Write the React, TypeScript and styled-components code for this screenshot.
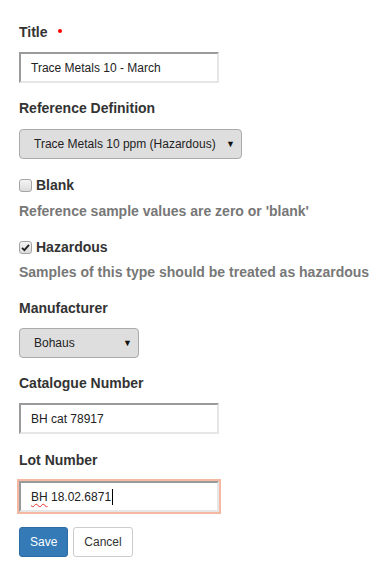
import React from "react";
import styled, { createGlobalStyle } from "styled-components";

const Global = createGlobalStyle`
  html, body { margin: 0; padding: 0; background: #fff; }
  body { font-family: "Liberation Sans", Arial, sans-serif; color: #333; }
`;

const Form = styled.form`
  display: flex;
  flex-direction: column;
  padding: 22px 0 0 19px;
`;

const Group = styled.div<{ $mb?: number }>`
  display: flex;
  flex-direction: column;
  align-items: flex-start;
  margin-bottom: ${(p) => p.$mb ?? 15}px;
`;

const Label = styled.label<{ $gap?: number }>`
  display: flex;
  align-items: center;
  font-size: 14px;
  line-height: 20px;
  font-weight: bold;
  color: #333;
  margin-bottom: ${(p) => p.$gap ?? 10}px;
`;

const Required = styled.span`
  width: 4px;
  height: 4px;
  border-radius: 50%;
  background: #f00;
  margin-left: 10px;
  margin-top: -2px;
`;

const TextBox = styled.div<{ $focus?: boolean }>`
  box-sizing: border-box;
  width: 200px;
  height: 31px;
  display: flex;
  align-items: center;
  padding: 0 10px;
  font-size: 12px;
  color: #222;
  background: #fff;
  white-space: nowrap;
  border: 2px solid;
  border-color: #9a9a9a #e6e6e6 #e6e6e6 #9a9a9a;
  box-shadow: ${(p) => (p.$focus ? "0 0 0 2px #f5b9a3" : "none")};
`;

const Squiggle = styled.span`
  text-decoration: underline wavy #e33;
  text-decoration-thickness: 1px;
  text-underline-offset: 2px;
`;

const Caret = styled.span`
  display: inline-block;
  width: 1px;
  height: 16px;
  background: #000;
  margin-left: 1px;
`;

const SelectBox = styled.div<{ $w: number }>`
  box-sizing: border-box;
  width: ${(p) => p.$w}px;
  height: 30px;
  display: flex;
  align-items: center;
  justify-content: space-between;
  padding: 0 6px 0 14px;
  font-size: 12px;
  color: #222;
  white-space: nowrap;
  background: #dedede;
  border: 1px solid #aaa;
  border-radius: 4px;
`;

const Arrow = styled.span`
  font-size: 9px;
  color: #111;
`;

const CheckRow = styled.label`
  display: flex;
  align-items: center;
  font-size: 14px;
  line-height: 20px;
  font-weight: bold;
  color: #333;
`;

const Box = styled.span`
  box-sizing: border-box;
  width: 13px;
  height: 13px;
  margin-right: 4px;
  border: 1px solid #a5a5a5;
  border-radius: 3px;
  background: linear-gradient(#f4f4f4, #dcdcdc);
  display: flex;
  align-items: center;
  justify-content: center;
`;

const Help = styled.div<{ $mt: number }>`
  margin-top: ${(p) => p.$mt}px;
  font-size: 14px;
  line-height: 20px;
  font-weight: bold;
  color: #777;
  white-space: nowrap;
`;

const Buttons = styled.div`
  display: flex;
  gap: 5px;
`;

const Button = styled.button<{ $primary?: boolean }>`
  box-sizing: border-box;
  height: 30px;
  padding: 0 10px;
  font-family: "Liberation Sans", Arial, sans-serif;
  font-size: 12px;
  border-radius: 3px;
  border: 1px solid ${(p) => (p.$primary ? "#2e6da4" : "#ccc")};
  background: ${(p) => (p.$primary ? "#337ab7" : "#fff")};
  color: ${(p) => (p.$primary ? "#fff" : "#333")};
`;

const Check = ({ checked }: { checked?: boolean }) => (
  <Box>
    {checked && (
      <svg width="9" height="9" viewBox="0 0 9 9">
        <path d="M1 4.8 L3.4 7.2 L8 1.8" fill="none" stroke="#222" strokeWidth="1.8" />
      </svg>
    )}
  </Box>
);

export default function App() {
  return (
    <>
      <Global />
      <Form onSubmit={(e) => e.preventDefault()}>
        <Group>
          <Label>
            Title<Required />
          </Label>
          <TextBox>Trace Metals 10 - March</TextBox>
        </Group>
        <Group $mb={16}>
          <Label $gap={11}>Reference Definition</Label>
          <SelectBox $w={223}>
            <span>Trace Metals 10 ppm (Hazardous)</span>
            <Arrow>▼</Arrow>
          </SelectBox>
        </Group>
        <Group $mb={16}>
          <CheckRow>
            <Check />
            Blank
          </CheckRow>
          <Help $mt={6}>Reference sample values are zero or 'blank'</Help>
        </Group>
        <Group $mb={16}>
          <CheckRow>
            <Check checked />
            Hazardous
          </CheckRow>
          <Help $mt={5}>Samples of this type should be treated as hazardous</Help>
        </Group>
        <Group>
          <Label>Manufacturer</Label>
          <SelectBox $w={120}>
            <span>Bohaus</span>
            <Arrow>▼</Arrow>
          </SelectBox>
        </Group>
        <Group $mb={16}>
          <Label>Catalogue Number</Label>
          <TextBox>BH cat 78917</TextBox>
        </Group>
        <Group>
          <Label $gap={11}>Lot Number</Label>
          <TextBox $focus>
            <Squiggle>BH</Squiggle>&nbsp;18.02.6871
            <Caret />
          </TextBox>
        </Group>
        <Buttons>
          <Button $primary type="submit">Save</Button>
          <Button type="button">Cancel</Button>
        </Buttons>
      </Form>
    </>
  );
}
